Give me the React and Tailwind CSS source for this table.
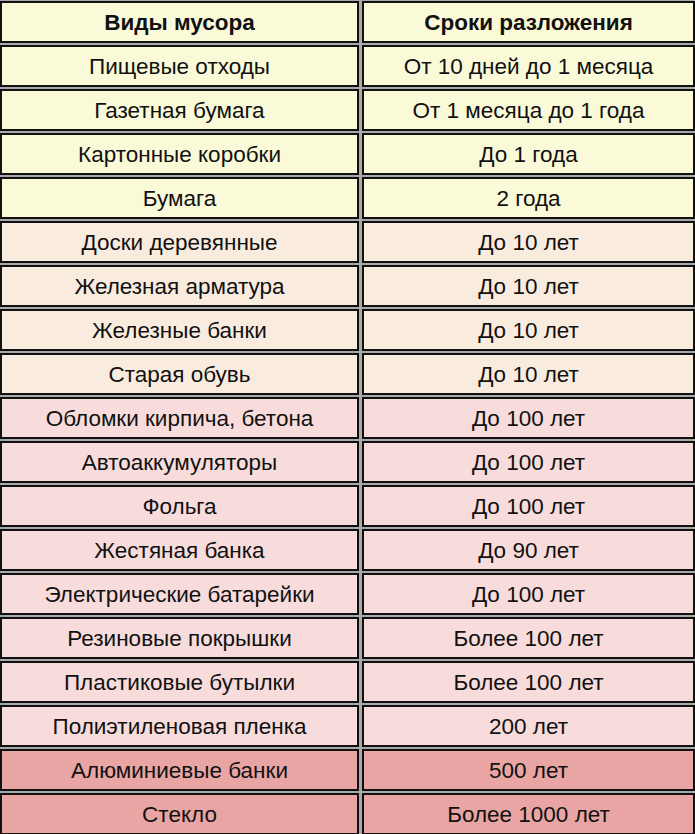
const ROWS = [
  ['Пищевые отходы', 'От 10 дней до 1 месяца', 'y'],
  ['Газетная бумага', 'От 1 месяца до 1 года', 'y'],
  ['Картонные коробки', 'До 1 года', 'y'],
  ['Бумага', '2 года', 'y'],
  ['Доски деревянные', 'До 10 лет', 'p'],
  ['Железная арматура', 'До 10 лет', 'p'],
  ['Железные банки', 'До 10 лет', 'p'],
  ['Старая обувь', 'До 10 лет', 'p'],
  ['Обломки кирпича, бетона', 'До 100 лет', 'r'],
  ['Автоаккумуляторы', 'До 100 лет', 'r'],
  ['Фольга', 'До 100 лет', 'r'],
  ['Жестяная банка', 'До 90 лет', 'r'],
  ['Электрические батарейки', 'До 100 лет', 'r'],
  ['Резиновые покрышки', 'Более 100 лет', 'r'],
  ['Пластиковые бутылки', 'Более 100 лет', 'r'],
  ['Полиэтиленовая пленка', '200 лет', 'r'],
  ['Алюминиевые банки', '500 лет', 'd'],
  ['Стекло', 'Более 1000 лет', 'd'],
];

const TONE = {
  y: 'bg-[#fafad9]',
  p: 'bg-[#f9ecdf]',
  r: 'bg-[#f7dcdb]',
  d: 'bg-[#e9a5a3]',
};

function Cell({ children, tone, bold }) {
  return (
    <div className={`flex h-[42px] items-center justify-center border-2 border-[#111] pt-[2px] ${tone} ${bold ? 'font-bold' : ''}`}>
      {children}
    </div>
  );
}

export default function App() {
  return (
    <div className="h-[834px] w-[695px] overflow-hidden bg-[#a9a9a9] pt-px font-['Liberation_Sans',Arial,sans-serif] text-[22.5px] text-[#111]">
      <div className="grid grid-cols-[359px_333px] gap-x-[3px] gap-y-[2px]">
        <Cell tone={TONE.y} bold>Виды мусора</Cell>
        <Cell tone={TONE.y} bold>Сроки разложения</Cell>
        {ROWS.map(([kind, term, t]) => (
          <div key={kind} className="contents">
            <Cell tone={TONE[t]}>{kind}</Cell>
            <Cell tone={TONE[t]}>{term}</Cell>
          </div>
        ))}
      </div>
    </div>
  );
}
